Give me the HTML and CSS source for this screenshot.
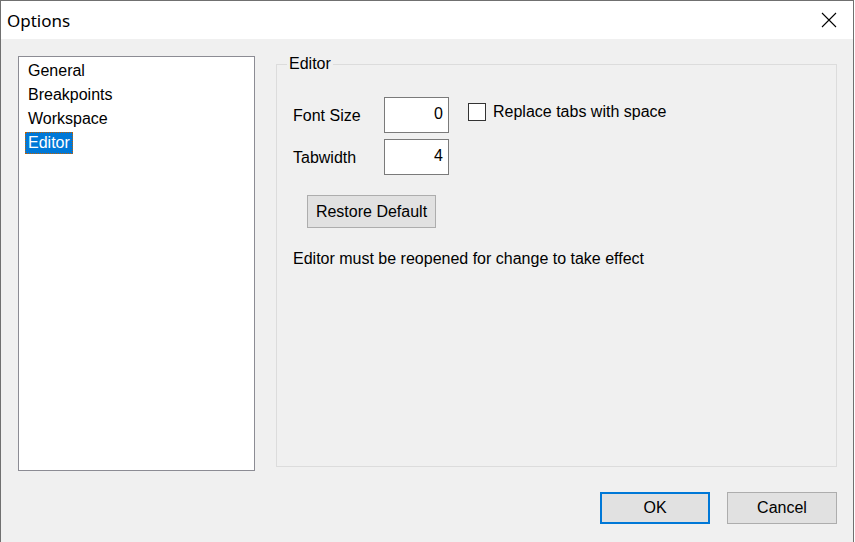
FILE: index.html
```html
<!DOCTYPE html>
<html>
<head>
<meta charset="utf-8">
<title>Options</title>
<link rel="stylesheet" href="styles.css">
</head>
<body>
<div class="window">
  <div class="titlebar">
    <span class="title">Options</span>
    <svg class="close" width="16" height="16" viewBox="0 0 16 16"><path d="M1 1L15 15M15 1L1 15" stroke="#000" stroke-width="1.1" fill="none"/></svg>
  </div>
  <div class="client">
    <div class="main">
      <div class="listbox">
        <div class="item"><span>General</span></div>
        <div class="item"><span>Breakpoints</span></div>
        <div class="item"><span>Workspace</span></div>
        <div class="item selected"><span>Editor</span></div>
      </div>
      <fieldset class="group">
        <legend class="legend">Editor</legend>
        <div class="form">
          <div class="rows">
            <div class="row">
              <span class="label">Font Size</span>
              <div class="input">0</div>
            </div>
            <div class="row">
              <span class="label">Tabwidth</span>
              <div class="input">4</div>
            </div>
          </div>
          <div class="check">
            <span class="box"></span>
            <span class="check-label">Replace tabs with space</span>
          </div>
        </div>
        <div class="btn restore">Restore Default</div>
        <div class="note">Editor must be reopened for change to take effect</div>
      </fieldset>
    </div>
    <div class="buttons">
      <div class="btn default">OK</div>
      <div class="btn">Cancel</div>
    </div>
  </div>
</div>
</body>
</html>
```
FILE: styles.css
```css
html, body {
  margin: 0;
  padding: 0;
  background: #ffffff;
}
body {
  font-family: "Liberation Sans", Arial, sans-serif;
  font-size: 16px;
  color: #000;
}
.window {
  width: 852px;
  height: 541px;
  border-top: 1px solid #707070;
  border-left: 1px solid #707070;
  border-right: 1px solid #707070;
  background: #f0f0f0;
  display: flex;
  flex-direction: column;
}
.titlebar {
  height: 38px;
  background: #ffffff;
  display: flex;
  align-items: center;
  justify-content: space-between;
  padding: 0 16px 0 6px;
}
.title {
  font-family: "Noto Sans", "Open Sans", sans-serif;
  font-size: 17px;
}
.close {
  display: block;
}
.client {
  flex: 1;
  display: flex;
  flex-direction: column;
  padding: 17px 16px 0 17px;
}
.main {
  display: flex;
  align-items: flex-start;
}
.listbox {
  flex-shrink: 0;
  width: 235px;
  height: 411px;
  background: #fff;
  border: 1px solid #8c8c94;
  padding-top: 2px;
  box-sizing: content-box;
}
.item {
  line-height: 24px;
  height: 24px;
  padding-left: 6px;
}
.item span {
  padding: 0 2px;
  border: 1px dotted transparent;
}
.item.selected span {
  background: #0078d7;
  color: #fff;
  border: 1px dotted #c06000;
  padding: 1px 2px 2px;
}
.group {
  flex-shrink: 0;
  margin: -1px 0 0 21px;
  width: 543px;
  height: 410px;
  border: 1px solid #dcdcdc;
  padding: 0 0 0 16px;
  box-sizing: content-box;
}
.legend {
  padding: 0 2px;
  margin-left: -6px;
  line-height: 18px;
}
.form {
  display: flex;
  align-items: flex-start;
  margin-top: 24px;
}
.rows {
  display: flex;
  flex-direction: column;
  gap: 6px;
}
.row {
  display: flex;
  align-items: center;
}
.label {
  width: 91px;
  position: relative;
  top: 1px;
}
.input {
  width: 58px;
  height: 34px;
  background: #fff;
  border: 1px solid #7a7a7a;
  text-align: right;
  padding-right: 5px;
  line-height: 32px;
}
.check {
  display: flex;
  align-items: center;
  margin-left: 19px;
  margin-top: 6px;
}
.box {
  width: 16px;
  height: 16px;
  border: 1px solid #333;
  background: #fff;
  margin-right: 7px;
}
.btn {
  width: 108px;
  height: 30px;
  background: #e1e1e1;
  border: 1px solid #adadad;
  text-align: center;
  line-height: 30px;
}
.restore {
  width: 127px;
  height: 31px;
  line-height: 31px;
  margin: 20px 0 0 14px;
}
.note {
  margin-top: 22px;
}
.buttons {
  display: flex;
  justify-content: flex-end;
  gap: 17px;
  margin-top: 21px;
}
.btn.default {
  border: 2px solid #0078d7;
  width: 106px;
  height: 28px;
  line-height: 28px;
}
```
